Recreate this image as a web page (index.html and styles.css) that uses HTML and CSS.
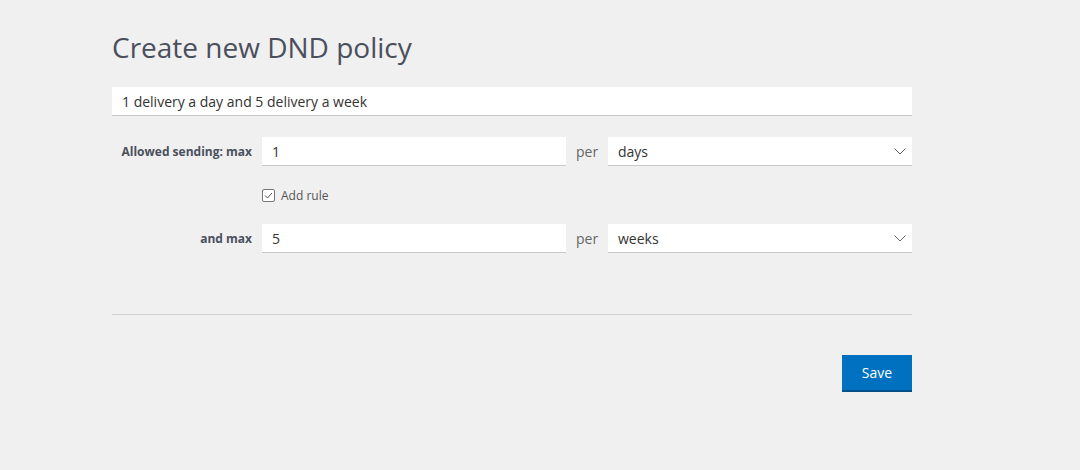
FILE: index.html
```html
<!DOCTYPE html>
<html>
<head>
<meta charset="utf-8">
<link rel="stylesheet" href="styles.css">
</head>
<body>
<div class="page">
  <h1 class="title">Create new DND policy</h1>
  <div class="field name">1 delivery a day and 5 delivery a week</div>
  <div class="rule">
    <div class="label">Allowed sending: max</div>
    <div class="field num">1</div>
    <div class="per">per</div>
    <div class="field select"><span>days</span><svg class="chev" viewBox="0 0 12 7" width="12" height="7"><path d="M0.5 0.5l5.5 5.5 5.5-5.5" fill="none" stroke="#666" stroke-width="1"/></svg></div>
  </div>
  <div class="addrow">
    <span class="check"><svg viewBox="0 0 13 13" width="13" height="13"><rect x="0.5" y="0.5" width="12" height="12" rx="1.5" fill="#fff" stroke="#777"/><path d="M3 6.5l2.5 2.5 4.5-5" fill="none" stroke="#555" stroke-width="1"/></svg></span>
    <span class="addlabel">Add rule</span>
  </div>
  <div class="rule">
    <div class="label">and max</div>
    <div class="field num">5</div>
    <div class="per">per</div>
    <div class="field select"><span>weeks</span><svg class="chev" viewBox="0 0 12 7" width="12" height="7"><path d="M0.5 0.5l5.5 5.5 5.5-5.5" fill="none" stroke="#666" stroke-width="1"/></svg></div>
  </div>
  <hr class="divider">
  <div class="actions"><button class="save">Save</button></div>
</div>
</body>
</html>
```
FILE: styles.css
```css
html, body { margin: 0; padding: 0; }
body {
  background: #f0f0f0;
  font-family: "Open Sans", "Noto Sans", sans-serif;
  width: 1080px;
  height: 470px;
  overflow: hidden;
}
.page {
  width: 800px;
  margin-left: 112px;
  padding-top: 28px;
}
.title {
  margin: 0;
  font-size: 28px;
  font-weight: 400;
  color: #4a4f5c;
  line-height: 38px;
  height: 38px;
  letter-spacing: 0;
}
.field {
  background: #fff;
  border-bottom: 1px solid #c8c8c8;
  box-sizing: border-box;
  height: 29px;
  font-size: 14px;
  color: #333;
  display: flex;
  align-items: center;
  padding-left: 10px;
}
.name { margin-top: 21px; }
.rule {
  display: flex;
  align-items: center;
  height: 29px;
}
.name + .rule { margin-top: 21px; }
.label {
  width: 140px;
  text-align: right;
  font-size: 12px;
  font-weight: 700;
  color: #4a4f5c;
  box-sizing: border-box;
  margin-right: 10px;
}
.num { width: 304px; }
.per {
  width: 42px;
  padding-left: 10px;
  box-sizing: border-box;
  font-size: 14px;
  color: #666;
}
.select {
  width: 304px;
  justify-content: space-between;
  padding-right: 6px;
}
.chev { margin-top: 1px; }
.addrow {
  display: flex;
  align-items: center;
  margin-left: 150px;
  margin-top: 22px;
  margin-bottom: 22px;
  height: 14px;
}
.check { display: flex; width: 13px; height: 13px; }
.addlabel {
  margin-left: 6px;
  font-size: 12px;
  color: #555;
}
.divider {
  margin: 61px 0 0 0;
  border: 0;
  border-top: 1px solid #d0d0d0;
  height: 0;
}
.actions {
  display: flex;
  justify-content: flex-end;
  margin-top: 40px;
}
.save {
  width: 70px;
  height: 37px;
  background: #0071c1;
  border: 0;
  border-bottom: 2px solid #00508c;
  color: #fff;
  font-family: "Open Sans", sans-serif;
  font-size: 14px;
  padding: 0;
}
```
